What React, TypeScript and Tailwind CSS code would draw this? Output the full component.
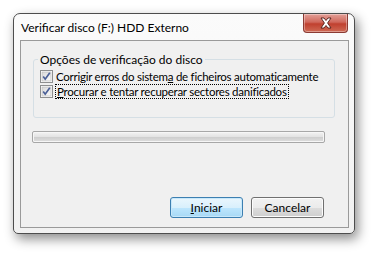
import React from 'react'

const font = { fontFamily: 'Lato, "Open Sans", Arial, sans-serif' }

function CheckBox() {
  return (
    <svg width="13" height="13" viewBox="0 0 13 13" className="shrink-0">
      <defs>
        <linearGradient id="cbg" x1="0" y1="0" x2="1" y2="1">
          <stop offset="0" stopColor="#d8d8d8" />
          <stop offset="1" stopColor="#fbfbfb" />
        </linearGradient>
      </defs>
      <rect x="0.5" y="0.5" width="12" height="12" fill="#fff" stroke="#8e8f8f" />
      <rect x="2" y="2" width="9" height="9" fill="url(#cbg)" stroke="#b6b6b6" strokeWidth="0.6" />
      <path d="M3.2 6.6 L5.2 9.2 L9.8 2.8" fill="none" stroke="#4a5f97" strokeWidth="1.7" />
    </svg>
  )
}

function CloseButton() {
  return (
    <div className="flex h-[19px] w-[45px] items-center justify-center rounded-b-[4px] border border-t-0 border-[#8b3a33] bg-[linear-gradient(#e3a098,#d0685c_45%,#c0402f_55%,#cf6a55)] shadow-[inset_0_0_0_1px_rgba(255,255,255,0.35)]">
      <svg width="14" height="12" viewBox="0 0 14 12">
        <path
          d="M2 1 H5 L7 3.5 L9 1 H12 L8.6 6 L12 11 H9 L7 8.5 L5 11 H2 L5.4 6 Z"
          fill="#fff"
          stroke="#4e1c17"
          strokeWidth="0.9"
          strokeLinejoin="round"
        />
      </svg>
    </div>
  )
}

function Button({ children, focused }: { children: React.ReactNode; focused?: boolean }) {
  return (
    <div
      className={
        'flex h-[21px] w-[73px] items-center justify-center rounded-[3px] border text-[12px] text-black ' +
        (focused
          ? 'border-[#3c7fb1] bg-[linear-gradient(#eaf6fd,#d9f0fc_50%,#bee6fd_51%,#a7d9f5)] shadow-[inset_0_0_0_1px_#c8e8fa]'
          : 'border-[#707070] bg-[linear-gradient(#f2f2f2,#ebebeb_50%,#dddddd_51%,#cfcfcf)] shadow-[inset_0_0_0_1px_#fcfcfc]')
      }
    >
      {children}
    </div>
  )
}

export default function App() {
  return (
    <div className="h-[254px] w-[372px] bg-white pl-[13px] pt-[13px]" style={font}>
      <div className="flex h-[221px] w-[342px] flex-col rounded-t-[7px] rounded-b-[5px] border border-[#4d4d4d] bg-[linear-gradient(#fbfbfb,#f1f1f1)] shadow-[3px_5px_12px_rgba(0,0,0,0.45)]">
        {/* title bar */}
        <div className="flex h-[26px] items-start justify-between pl-[7px] pr-[6px]">
          <div className="whitespace-nowrap pt-[6px] text-[12px] leading-[15px] text-black">
            Verificar disco (F:) HDD Externo
          </div>
          <CloseButton />
        </div>

        {/* client area */}
        <div className="mb-[5px] ml-[6px] mr-[5px] flex flex-1 flex-col border border-[#9a9a9a] bg-[#f0f0f0]">
          <fieldset className="ml-[12px] mt-[11px] h-[66px] w-[302px] rounded-[3px] border border-[#d5dfe5] pl-[6px] pt-[2px]">
            <legend className="-ml-[2px] whitespace-nowrap px-[2px] text-[12px] leading-[15px] text-black">
              Opções de verificação do disco
            </legend>
            <div className="flex h-[15px] items-center gap-[2px] whitespace-nowrap text-[11.5px] leading-[15px] tracking-[-0.25px] text-black">
              <CheckBox />
              <span className="ml-[1px]">
                Corrigir erros do sistem<u>a</u> de ficheiros automaticamente
              </span>
            </div>
            <div className="flex h-[15px] items-center gap-[2px] whitespace-nowrap text-[11.5px] leading-[15px] tracking-[-0.25px] text-black">
              <CheckBox />
              <span className="border border-dotted border-black px-[1px] leading-[13px]">
                <u>P</u>rocurar e tentar recuperar sectores danificados
              </span>
            </div>
          </fieldset>

          <div className="ml-[11px] mt-[13px] h-[12px] w-[293px] rounded-[2px] border border-[#a7a7a7] bg-[linear-gradient(#f3f3f3,#e4e4e4_45%,#cfcfcf_55%,#dedede)] shadow-[inset_0_0_0_1px_#f6f6f6]" />

          <div className="mt-auto mb-[9px] mr-[24px] flex justify-end gap-[8px]">
            <Button focused>
              <span>
                <u>I</u>niciar
              </span>
            </Button>
            <Button>Cancelar</Button>
          </div>
        </div>
      </div>
    </div>
  )
}
